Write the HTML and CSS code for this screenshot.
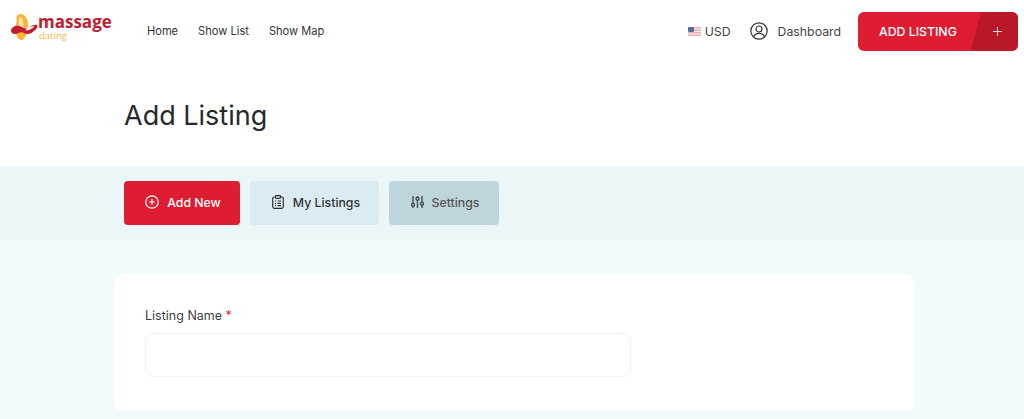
FILE: index.html
```html
<!DOCTYPE html>
<html lang="en">
<head>
<meta charset="utf-8">
<title>Add Listing</title>
<link rel="stylesheet" href="styles.css">
</head>
<body>
<header class="topbar">
  <a class="logo" href="#">
    <svg class="logo-mark" width="30" height="28" viewBox="0 0 30 28">
      <path d="M11 1C15 1 18 6 18 12 18 19 15 27 11.500 27 8 27 5.500 22 5.500 17 5.500 12 7 9 6.500 6 6 3 8 1 11 1z" fill="#f9b43a"/>
      <path d="M10 4c2 0 3 3 3 5l1 7c-2 0-5-2-5-5 0-3 0-7 1-7z" fill="#fde3b0"/>
      <path d="M1 18C1 14 6 12 9 13 13 14 15 17 18 15 21 13 25 11 27 12 28 13 27 16 24 18 21 21 17 22 14 20 11 18 8 21 5 21 3 21 1 20 1 18z" fill="#bf1e2e"/>
      <path d="M16 16C19 14 22 13 24.500 13.500 22 15.500 19 17.500 16 17.500z" fill="#fff"/>
    </svg>
    <span class="logo-text">
      <span class="logo-name">massage</span>
      <span class="logo-sub">dating</span>
    </span>
  </a>
  <nav class="nav">
    <a href="#">Home</a>
    <a href="#">Show List</a>
    <a href="#">Show Map</a>
  </nav>
  <div class="actions">
    <span class="currency">
      <svg width="13" height="9" viewBox="0 0 13 9">
        <rect width="13" height="9" rx="1" fill="#e9a9ad"/>
        <rect y="1.300" width="13" height="1.200" fill="#f6eeee"/>
        <rect y="3.900" width="13" height="1.200" fill="#f6eeee"/>
        <rect y="6.500" width="13" height="1.200" fill="#f6eeee"/>
        <rect width="6" height="5" rx="1" fill="#5a6a94"/>
      </svg>
      USD
    </span>
    <a class="dash" href="#">
      <svg width="18" height="18" viewBox="0 0 18 18" fill="none" stroke="#333" stroke-width="1.200">
        <circle cx="9" cy="9" r="8.200"/>
        <circle cx="9" cy="7" r="3"/>
        <path d="M3.600 15c.8-2.600 3-3.600 5.400-3.600s4.600 1 5.400 3.600"/>
      </svg>
      Dashboard
    </a>
    <a class="add-btn" href="#">
      <span class="add-label">ADD LISTING</span>
      <span class="add-plus">
        <svg width="9" height="9" viewBox="0 0 9 9" stroke="#f3d6d9" stroke-width="1"><path d="M4.500 0v9M0 4.500h9"/></svg>
      </span>
    </a>
  </div>
</header>

<section class="title-wrap">
  <h1>Add Listing</h1>
</section>

<section class="tabs-band">
  <a class="tab tab-new" href="#">
    <svg width="14" height="14" viewBox="0 0 14 14" fill="none" stroke="#fff" stroke-width="1.200">
      <circle cx="7" cy="7" r="6.200"/>
      <path d="M7 4v6M4 7h6"/>
    </svg>
    Add New
  </a>
  <a class="tab tab-list" href="#">
    <svg width="12" height="14" viewBox="0 0 12 14" fill="none" stroke="#2d3236" stroke-width="1.200">
      <rect x=".7" y="2" width="10.600" height="11.300" rx="1.500"/>
      <rect x="3.500" y=".7" width="5" height="2.600" rx=".8" fill="#daecf2"/>
      <path d="M3 6h1M5.500 6H9M3 8.300h1M5.500 8.300H9M3 10.600h1M5.500 10.600H9"/>
    </svg>
    My Listings
  </a>
  <a class="tab tab-settings" href="#">
    <svg width="13" height="14" viewBox="0 0 13 14" fill="none" stroke="#474f53" stroke-width="1.400">
      <path d="M2 1v7M2 11.500V13M6.500 1v1M6.500 5.500V13M11 1v6M11 10.500V13"/>
      <circle cx="2" cy="9.700" r="1.500"/>
      <circle cx="6.500" cy="3.700" r="1.500"/>
      <circle cx="11" cy="8.800" r="1.500"/>
    </svg>
    Settings
  </a>
</section>

<main class="content">
  <form class="card">
    <label class="field-label" for="listing-name">Listing Name <span class="req">*</span></label>
    <input class="field-input" id="listing-name" type="text">
  </form>
</main>
</body>
</html>
```
FILE: styles.css
```css
* { box-sizing: border-box; }
html, body { margin: 0; padding: 0; }
body {
  height: 419px;
  overflow: hidden;
  background: #f2fafc;
  font-family: Inter, "Liberation Sans", sans-serif;
  color: #333;
}
a { color: inherit; text-decoration: none; }

.topbar {
  height: 62px;
  background: #fff;
  display: flex;
  align-items: center;
  padding: 0 6px 0 10px;
}
.logo { display: flex; align-items: flex-start; width: 137px; margin-top: -8px; }
.logo-mark { flex: none; }
.logo-text { display: flex; flex-direction: column; margin-left: -2px; margin-top: -1px; }
.logo-name {
  font: 700 17px/19px "Open Sans", sans-serif;
  color: #bd2032;
}
.logo-sub {
  font: 400 9.500px/9px "Open Sans", sans-serif;
  color: #f9b53f;
  padding-left: 1px;
}
.nav { display: flex; gap: 20px; font-size: 11.100px; color: #333; }
.actions { margin-left: auto; display: flex; align-items: center; }
.currency {
  display: flex; align-items: center; gap: 4px;
  font-size: 12.300px; color: #444;
}
.dash {
  display: flex; align-items: center; gap: 10px;
  font-size: 12.300px; color: #444;
  margin-left: 19px;
}
.add-btn {
  margin-left: 17px;
  width: 160px; height: 39px;
  display: flex; align-items: center;
  border-radius: 6px;
  overflow: hidden;
  background: #de1c32;
  color: #fff;
  font-size: 12.300px;
  font-weight: 500;
  position: relative;
}
.add-label { padding-left: 21px; }
.add-plus {
  position: absolute; top: 0; right: 0; bottom: 0;
  width: 47px;
  background: #b91828;
  clip-path: polygon(10px 0, 100% 0, 100% 100%, 0 100%);
  display: flex; align-items: center; justify-content: center;
  padding-left: 6px;
}

.title-wrap {
  height: 104px;
  background: #fff;
  padding-left: 124px;
  display: flex;
  align-items: center;
}
h1 {
  margin: 4px 0 0;
  font: 400 27px/1.200 Inter, sans-serif;
  color: #26292b;
}

.tabs-band {
  height: 74px;
  background: #ebf6f9;
  padding: 15px 0 0 124px;
  display: flex;
  gap: 10px;
  align-items: flex-start;
}
.tab {
  height: 44px;
  display: flex; align-items: center; justify-content: center;
  gap: 8px;
  padding: 0 0 2px 2px;
  border-radius: 4px;
  font-size: 12.300px;
  font-weight: 500;
}
.tab-new { width: 116px; background: #de1c32; color: #fff; }
.tab-list { width: 129px; background: #daecf2; color: #333; gap: 9px; padding-left: 3px; }
.tab-settings { width: 110px; background: #bdd5db; color: #555; }

.content { padding: 34px 0 0 114px; }
.card {
  width: 800px;
  height: 137px;
  background: #fff;
  border-radius: 8px;
  padding: 34px 31px 0;
  display: flex;
  flex-direction: column;
  align-items: flex-start;
}
.field-label { font-size: 12.500px; line-height: 16px; color: #3a3f42; }
.req { color: #e5243c; }
.field-input {
  display: block;
  margin-top: 9px;
  width: 486px;
  height: 44px;
  background: #fff;
  border: 1px solid #eef2f5;
  border-radius: 8px;
}
```
